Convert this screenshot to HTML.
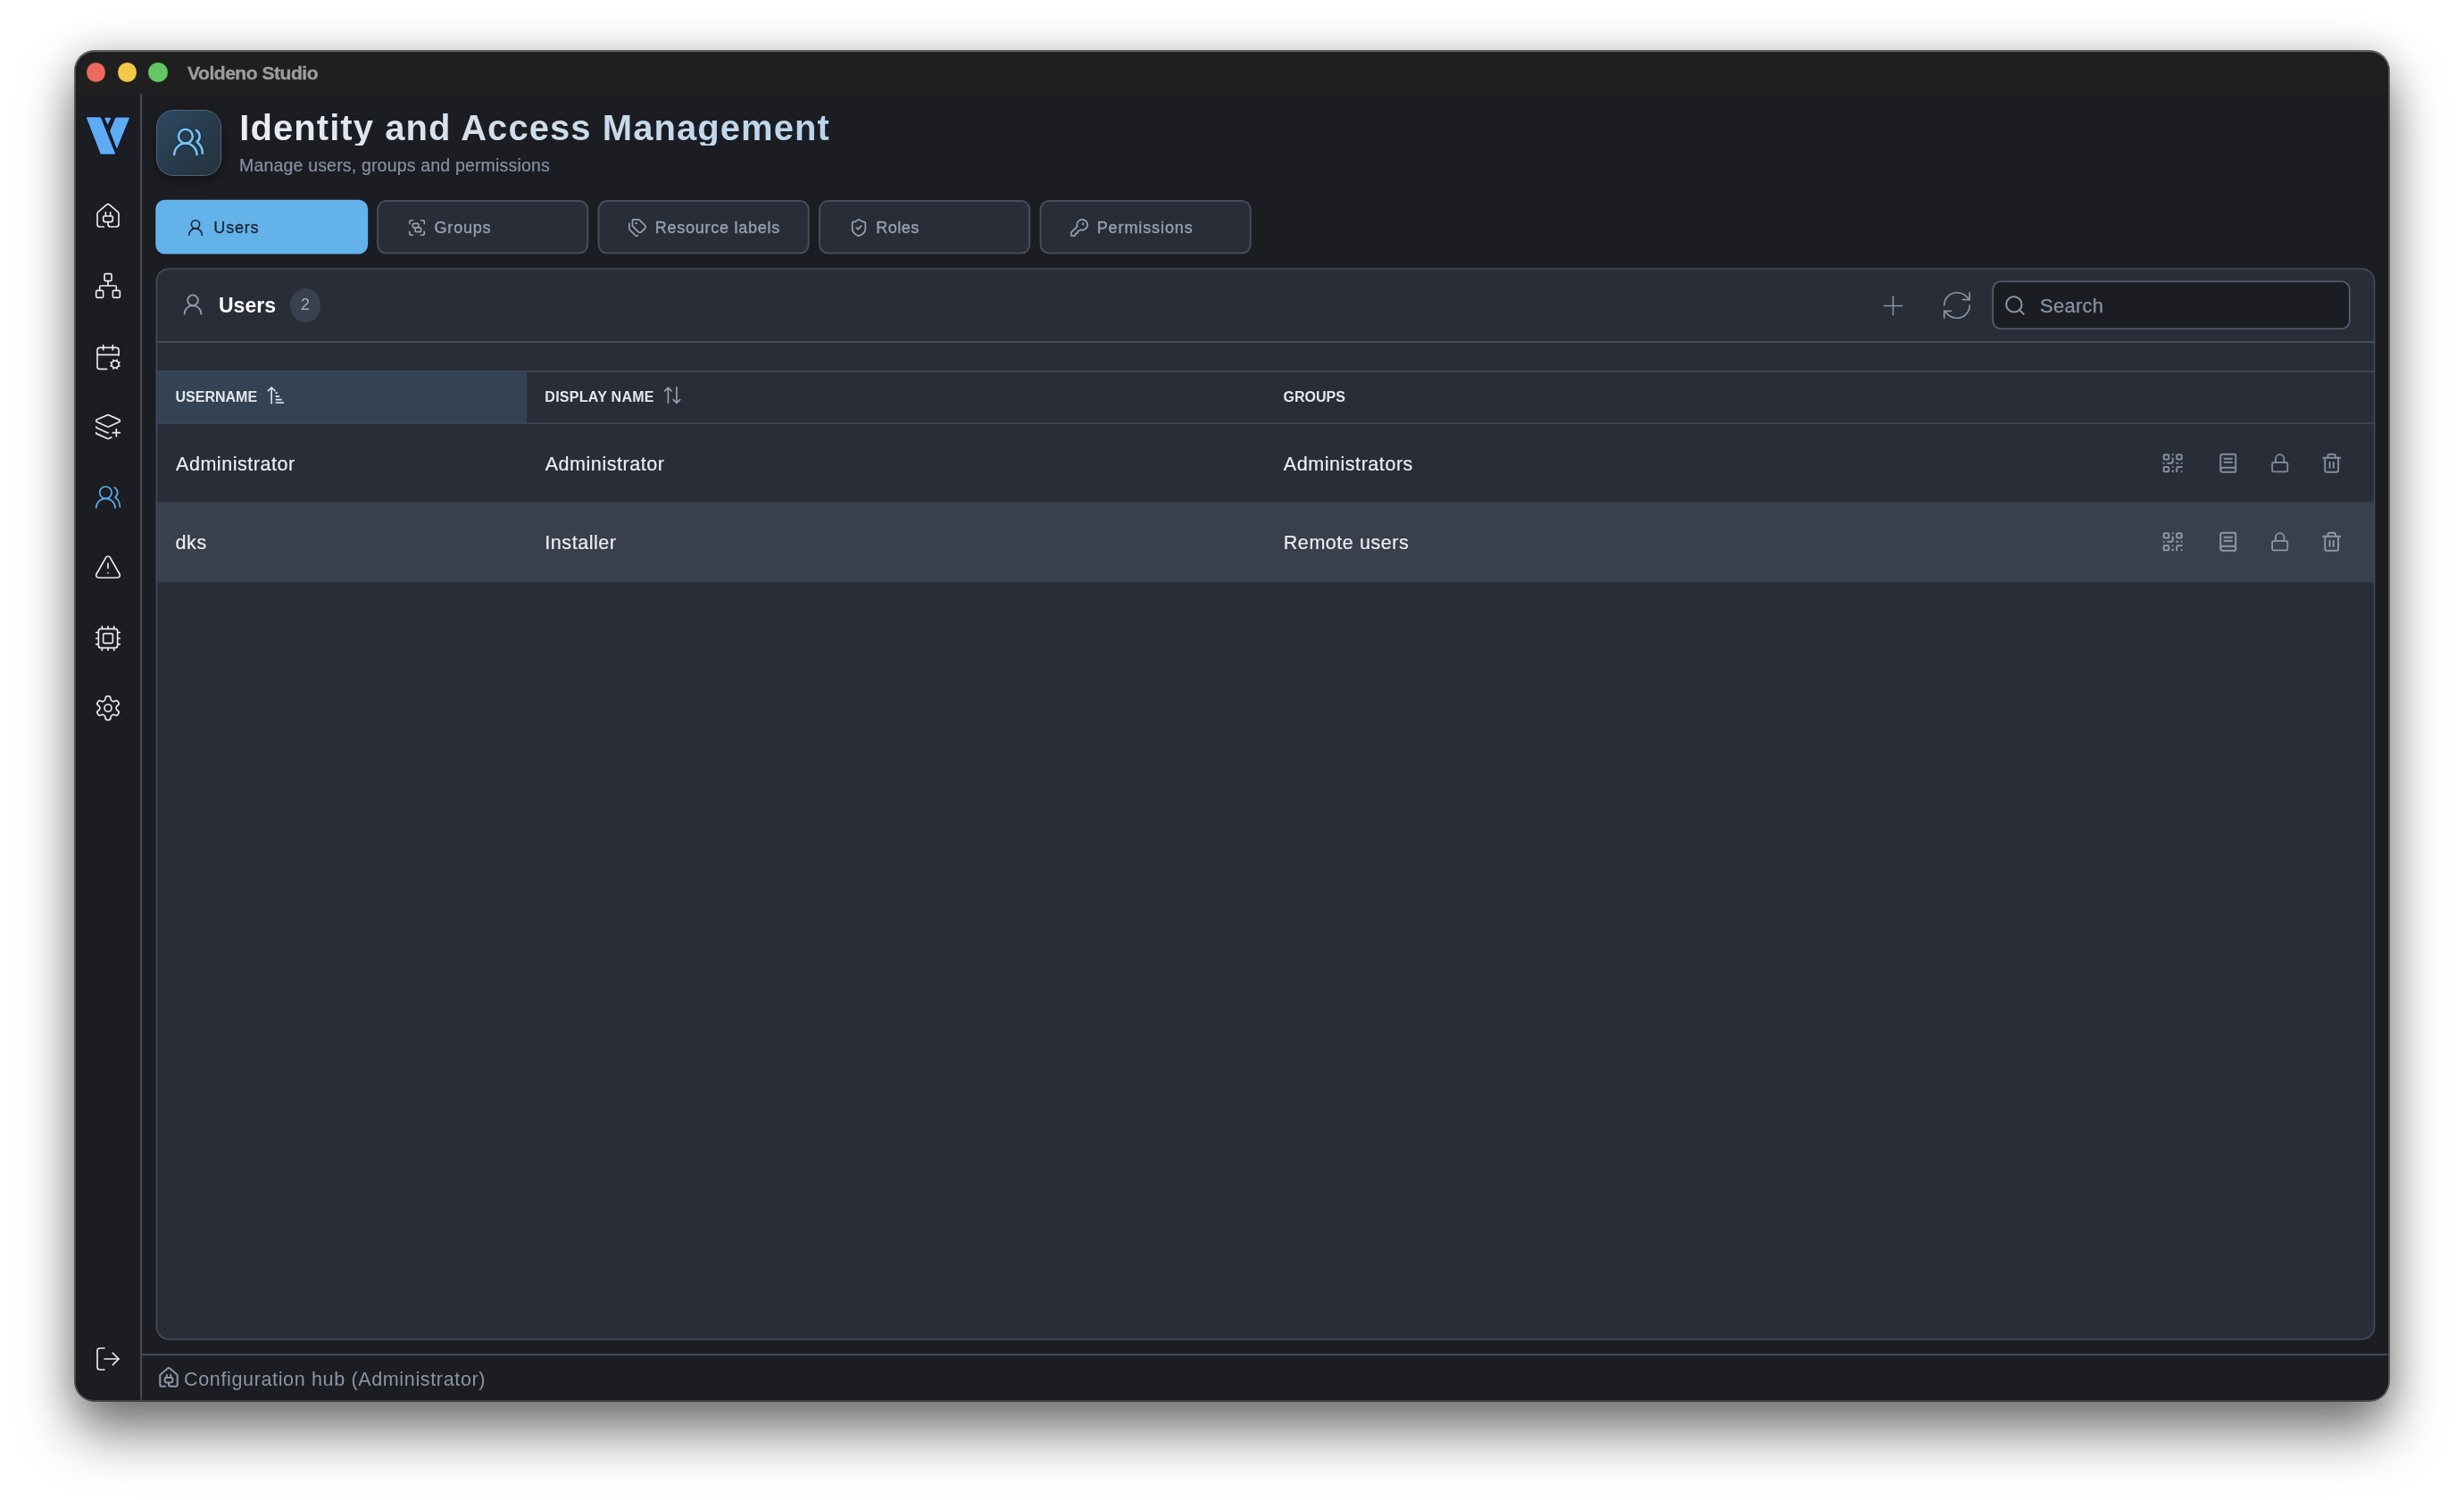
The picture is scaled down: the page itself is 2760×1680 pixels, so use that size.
<!DOCTYPE html>
<html lang="en">
<head>
<meta charset="utf-8">
<title>Voldeno Studio</title>
<style>
*{box-sizing:border-box;margin:0;padding:0}
html,body{width:2760px;height:1680px;overflow:hidden;background:#fff}
body{font-family:"Liberation Sans",sans-serif;position:relative}
.win{position:absolute;left:84px;top:57px;width:2592px;height:1511.5px;border-radius:22px;background:#1b1d23;overflow:hidden;z-index:2}
.shadow{position:absolute;left:84px;top:57px;width:2592px;height:1511.5px;border-radius:22px;z-index:1;
 box-shadow:0 0 0 1px rgba(0,0,0,.55),0 36px 60px rgba(0,0,0,.5),0 2px 44px rgba(0,0,0,.21)}
.pg{position:absolute;left:-84px;top:-57px;width:2760px;height:1680px}
.edge{position:absolute;left:84px;top:57px;width:2592px;height:1511.5px;border-radius:22px;box-shadow:inset 0 0 0 1.2px rgba(255,255,255,.2),inset 0 1px 0 .5px rgba(255,255,255,.16),inset 0 0 0 2.2px rgba(0,0,0,.4);pointer-events:none;z-index:5}
.abs{position:absolute}
.t{position:absolute;white-space:nowrap;line-height:1;will-change:opacity;opacity:.999}
.titlebar{position:absolute;left:84px;top:56px;width:2592px;height:49.5px;background:#1f1f1f}
.tl{position:absolute;width:21.6px;height:21.6px;border-radius:50%;top:70.25px;box-shadow:inset 0 0 0 .6px rgba(0,0,0,.18)}
.side{position:absolute;left:84px;top:105px;width:74px;height:1464px;background:#1b1d23}
.sideline{position:absolute;left:157.2px;top:105px;width:1.6px;height:1464px;background:#3e4451}
.ico{position:absolute;fill:none;stroke:currentColor;stroke-linecap:round;stroke-linejoin:round;overflow:visible}
.sb{color:#e9ebee;stroke-width:1.25}
.tab{position:absolute;top:224px;height:60.5px;width:237.5px;border-radius:11.5px;background:#2a2e38;border:1.5px solid #40465300;box-shadow:inset 0 0 0 1.4px #3f4552}
.tab.on{background:#63b3ea;box-shadow:none}
.panel{position:absolute;left:175px;top:300px;width:2486px;height:1200.5px;border-radius:15px;background:#2a2e38;border:1.5px solid #3e4451;overflow:hidden}
.hl{position:absolute;height:1.5px;background:#3e4451}
</style>
</head>
<body>
<div class="shadow"></div>
<div class="win"><div class="pg">

<!-- title bar -->
<div class="titlebar"></div>
<div class="tl" style="left:96.900px;background:#ec6a5f"></div>
<div class="tl" style="left:131.600px;background:#f4c848"></div>
<div class="tl" style="left:166.100px;background:#63c766"></div>
<div class="t" id="wtitle" style="left:210px;top:71px;font-size:21px;font-weight:700;letter-spacing:-.450px;color:#9e9e9e;-webkit-text-stroke:.35px #9e9e9e">Voldeno Studio</div>

<!-- sidebar -->
<div class="side"></div>
<svg class="abs" style="left:0;top:0" width="2760" height="1680"><rect x="157.070" y="105" width="2" height="1465" fill="#464c59"/></svg>

<!-- sidebar icons -->
<svg class="ico sb" width="32" height="32" viewBox="0 0 24 24" style="left:105px;top:226.0px"><path d="M10 12V8.964"/><path d="M14 12V8.964"/><path d="M15 12a1 1 0 0 1 1 1v2a2 2 0 0 1-2 2h-4a2 2 0 0 1-2-2v-2a1 1 0 0 1 1-1z"/><path d="M8.5 21H5a2 2 0 0 1-2-2v-9a2 2 0 0 1 .709-1.528l7-5.999a2 2 0 0 1 2.582 0l7 5.999A2 2 0 0 1 21 10v9a2 2 0 0 1-2 2h-5a2 2 0 0 1-2-2v-2"/></svg>
<svg class="ico sb" width="32" height="32" viewBox="0 0 24 24" style="left:105px;top:304.0px"><rect x="16" y="16" width="6" height="6" rx="1"/><rect x="2" y="16" width="6" height="6" rx="1"/><rect x="9" y="2" width="6" height="6" rx="1"/><path d="M5 16v-3a1 1 0 0 1 1-1h12a1 1 0 0 1 1 1v3"/><path d="M12 12V8"/></svg>
<svg class="ico sb" width="32" height="32" viewBox="0 0 24 24" style="left:105px;top:384.0px"><path d="m15.228 16.852-.923-.383"/><path d="m15.228 19.148-.923.383"/><path d="M16 2v4"/><path d="m16.47 14.305.382.923"/><path d="m16.852 20.772-.383.924"/><path d="m19.148 15.228.383-.923"/><path d="m19.53 21.696-.382-.924"/><path d="m20.772 16.852.924-.383"/><path d="m20.772 19.148.924.383"/><path d="M21 10.592V6a2 2 0 0 0-2-2H5a2 2 0 0 0-2 2v14a2 2 0 0 0 2 2h6"/><path d="M3 10h18"/><path d="M8 2v4"/><circle cx="18" cy="18" r="3"/></svg>
<svg class="ico sb" width="32" height="32" viewBox="0 0 24 24" style="left:105px;top:462.0px"><path d="M12.83 2.18a2 2 0 0 0-1.66 0L2.6 6.08a1 1 0 0 0 0 1.83l8.58 3.91a2 2 0 0 0 1.66 0l8.58-3.9a1 1 0 0 0 0-1.83z"/><path d="M16 17h6"/><path d="M19 14v6"/><path d="M2 12a1 1 0 0 0 .58.91l8.6 3.91a2 2 0 0 0 .825.178"/><path d="M2 17a1 1 0 0 0 .58.91l8.6 3.91a2 2 0 0 0 1.65 0l2.116-.962"/></svg>
<svg class="ico sb" width="32" height="32" viewBox="0 0 24 24" style="left:105px;top:541.3px;color:#5ea8e2"><path d="M18 21a8 8 0 0 0-16 0"/><circle cx="10" cy="8" r="5"/><path d="M22 20c0-3.37-2-6.5-4-8a5 5 0 0 0-.45-8.3"/></svg>
<svg class="ico sb" width="32" height="32" viewBox="0 0 24 24" style="left:105px;top:619.3px"><path d="m21.73 18-8-14a2 2 0 0 0-3.48 0l-8 14A2 2 0 0 0 4 21h16a2 2 0 0 0 1.73-3"/><path d="M12 9v4"/><path d="M12 17h.01"/></svg>
<svg class="ico sb" width="32" height="32" viewBox="0 0 24 24" style="left:105px;top:699.0px"><path d="M12 20v2"/><path d="M12 2v2"/><path d="M17 20v2"/><path d="M17 2v2"/><path d="M2 12h2"/><path d="M2 17h2"/><path d="M2 7h2"/><path d="M20 12h2"/><path d="M20 17h2"/><path d="M20 7h2"/><path d="M7 20v2"/><path d="M7 2v2"/><rect x="4" y="4" width="16" height="16" rx="2"/><rect x="8" y="8" width="8" height="8" rx="1"/></svg>
<svg class="ico sb" width="32" height="32" viewBox="0 0 24 24" style="left:105px;top:777.0px"><path d="M12.22 2h-.44a2 2 0 0 0-2 2v.18a2 2 0 0 1-1 1.73l-.43.25a2 2 0 0 1-2 0l-.15-.08a2 2 0 0 0-2.73.73l-.22.38a2 2 0 0 0 .73 2.73l.15.1a2 2 0 0 1 1 1.72v.51a2 2 0 0 1-1 1.74l-.15.09a2 2 0 0 0-.73 2.73l.22.38a2 2 0 0 0 2.73.73l.15-.08a2 2 0 0 1 2 0l.43.25a2 2 0 0 1 1 1.73V20a2 2 0 0 0 2 2h.44a2 2 0 0 0 2-2v-.18a2 2 0 0 1 1-1.73l.43-.25a2 2 0 0 1 2 0l.15.08a2 2 0 0 0 2.73-.73l.22-.39a2 2 0 0 0-.73-2.73l-.15-.08a2 2 0 0 1-1-1.74v-.5a2 2 0 0 1 1-1.74l.15-.09a2 2 0 0 0 .73-2.73l-.22-.38a2 2 0 0 0-2.73-.73l-.15.08a2 2 0 0 1-2 0l-.43-.25a2 2 0 0 1-1-1.73V4a2 2 0 0 0-2-2z"/><circle cx="12" cy="12" r="3"/></svg>
<svg class="ico sb" width="32" height="32" viewBox="0 0 24 24" style="left:105px;top:1506.0px"><path d="m16 17 5-5-5-5"/><path d="M21 12H9"/><path d="M9 21H5a2 2 0 0 1-2-2V5a2 2 0 0 1 2-2h4"/></svg>

<!-- header -->
<svg class="abs" style="left:90px;top:120px;overflow:visible" width="62" height="62" viewBox="90 120 62 62">
 <g fill="#5eaaf3" stroke="#040a1c" stroke-width="1.6" stroke-linejoin="round" paint-order="stroke">
  <path d="M97.6 131.2h14.2q1 0 1.4.9l15.9 39.6q.4 1.1-.7 1.1h-14.6q-1 0-1.4-.9l-15.5-39.6q-.4-1.1.7-1.1z"/>
  <path d="M130.2 131.5h14q1.1 0 .7 1l-13.6 33.4q-.4.9-.8 0l-7.3-18.6q-.2-.6.1-1.200l5.900-14q.3-.6 1-.6z"/>
  <path d="M117.700 131.800h6q.8 0 .5.700l-3.100 6.700q-.4.800-.8 0l-3.100-6.700q-.3-.7.500-.7z"/>
 </g>
</svg>
<div class="abs" style="left:174.600px;top:122.900px;width:73.700px;height:73.700px;border-radius:19px;border:1.400px solid #4f6478;background:linear-gradient(135deg,#2e4963 0%,#283b4c 50%,#25323d 100%);box-shadow:0 5px 14px rgba(0,0,0,.35)"></div>
<svg class="ico" style="left:192.300px;top:140.200px;color:#79c2f0;stroke-width:1.600;filter:drop-shadow(0 0 1px #0d2740)" width="38" height="38" viewBox="0 0 24 24"><path d="M18 21a8 8 0 0 0-16 0"/><circle cx="10" cy="8" r="5"/><path d="M22 20c0-3.370-2-6.500-4-8a5 5 0 0 0-.450-8.300"/></svg>
<div class="t" id="h1" style="left:268.300px;top:123.100px;font-size:40px;font-weight:700;letter-spacing:1.060px;background:linear-gradient(90deg,#eceef3 0%,#d3deeb 45%,#b9d6ee 100%);-webkit-background-clip:text;background-clip:text;color:transparent">Identity and Access Management</div>
<div class="t" id="h2" style="left:268px;top:176.100px;font-size:19.500px;letter-spacing:.180px;-webkit-text-stroke:.2px;color:#8791a3">Manage users, groups and permissions</div>


<!-- tabs -->
<svg class="abs" style="left:0;top:0" width="2760" height="1680"><rect x="174.250" y="223.750" width="237.900" height="60.750" rx="10.500" fill="#63b3ea"/><rect x="423.04" y="225.100" width="235.200" height="58.400" rx="9.500" fill="#292d37" stroke="#464c5a" stroke-width="2"/><rect x="670.54" y="225.100" width="235.200" height="58.400" rx="9.500" fill="#292d37" stroke="#464c5a" stroke-width="2"/><rect x="918.04" y="225.100" width="235.200" height="58.400" rx="9.500" fill="#292d37" stroke="#464c5a" stroke-width="2"/><rect x="1165.54" y="225.100" width="235.200" height="58.400" rx="9.500" fill="#292d37" stroke="#464c5a" stroke-width="2"/></svg>
<svg class="ico" style="left:208.25px;top:243.500px;color:#1c2733;stroke-width:1.850" width="22" height="22" viewBox="0 0 24 24"><circle cx="12" cy="8" r="5"/><path d="M20 21a8 8 0 0 0-16 0"/></svg>
<div class="t" id="tab0" style="left:239.35px;top:246.400px;font-size:18px;-webkit-text-stroke:.35px;letter-spacing:0.800px;color:#1c2733">Users</div>
<svg class="ico" style="left:456.25px;top:243.500px;color:#98a1b0;stroke-width:1.850" width="22" height="22" viewBox="0 0 24 24"><path d="M3 7V5c0-1.100.900-2 2-2h2"/><path d="M17 3h2c1.100 0 2 .900 2 2v2"/><path d="M21 17v2c0 1.100-.900 2-2 2h-2"/><path d="M7 21H5c-1.100 0-2-.900-2-2v-2"/><rect width="7" height="5" x="7" y="7" rx="1"/><rect width="7" height="5" x="10" y="12" rx="1"/></svg>
<div class="t" id="tab1" style="left:486.55px;top:246.400px;font-size:18px;-webkit-text-stroke:.35px;letter-spacing:0.800px;color:#98a1b0">Groups</div>
<svg class="ico" style="left:703.40px;top:243.500px;color:#98a1b0;stroke-width:1.850" width="22" height="22" viewBox="0 0 24 24"><path d="M13.172 2a2 2 0 0 1 1.414.586l6.710 6.710a2.400 2.400 0 0 1 0 3.408l-4.592 4.592a2.400 2.400 0 0 1-3.408 0l-6.710-6.710A2 2 0 0 1 6 9.172V3a1 1 0 0 1 1-1z"/><path d="M2 7v6.172a2 2 0 0 0 .586 1.414l6.710 6.710a2.400 2.400 0 0 0 3.191.193"/><circle cx="10.500" cy="6.500" r=".5" fill="currentColor"/></svg>
<div class="t" id="tab2" style="left:733.70px;top:246.400px;font-size:18px;-webkit-text-stroke:.35px;letter-spacing:0.750px;color:#98a1b0">Resource labels</div>
<svg class="ico" style="left:950.90px;top:243.500px;color:#98a1b0;stroke-width:1.850" width="22" height="22" viewBox="0 0 24 24"><path d="M20 13c0 5-3.500 7.500-7.660 8.950a1 1 0 0 1-.670-.010C7.500 20.500 4 18 4 13V6a1 1 0 0 1 1-1c2 0 4.500-1.200 6.240-2.720a1.170 1.170 0 0 1 1.520 0C14.510 3.810 17 5 19 5a1 1 0 0 1 1 1z"/><path d="m9 12 2 2 4-4"/></svg>
<div class="t" id="tab3" style="left:981.20px;top:246.400px;font-size:18px;-webkit-text-stroke:.35px;letter-spacing:0.500px;color:#98a1b0">Roles</div>
<svg class="ico" style="left:1198.40px;top:243.500px;color:#98a1b0;stroke-width:1.850" width="22" height="22" viewBox="0 0 24 24"><path d="M2.586 17.414A2 2 0 0 0 2 18.828V21a1 1 0 0 0 1 1h3a1 1 0 0 0 1-1v-1a1 1 0 0 1 1-1h1a1 1 0 0 0 1-1v-1a1 1 0 0 1 1-1h.172a2 2 0 0 0 1.414-.586l.814-.814a6.500 6.500 0 1 0-4-4z"/><circle cx="16.500" cy="7.500" r=".5" fill="currentColor"/></svg>
<div class="t" id="tab4" style="left:1228.70px;top:246.400px;font-size:18px;-webkit-text-stroke:.35px;letter-spacing:0.900px;color:#98a1b0">Permissions</div>

<!-- panel -->
<svg class="abs" style="left:0;top:0" width="2760" height="1680"><rect x="175.400" y="300.950" width="2484.200" height="1199.050" rx="14" fill="#292d37" stroke="#464c5a" stroke-width="1.600"/></svg>
<svg class="ico" style="left:201.55px;top:327.40px;color:#8c95a5;stroke-width:1.700" width="28" height="28" viewBox="0 0 24 24"><circle cx="12" cy="8" r="5"/><path d="M20 21a8 8 0 0 0-16 0"/></svg>
<div class="t" id="ph" style="left:245px;top:331.200px;font-size:23px;font-weight:700;color:#fff">Users</div>
<div class="abs" style="left:325px;top:323.300px;width:33.700px;height:37.500px;border-radius:50%;background:#394050"></div>
<div class="t" id="badge" style="left:325px;width:33.700px;text-align:center;top:332.200px;font-size:18.500px;color:#a2abba">2</div>
<svg class="ico" style="left:2103.25px;top:324.50px;color:#8b94a4;stroke-width:1.100" width="35" height="35" viewBox="0 0 24 24"><path d="M5 12h14"/><path d="M12 5v14"/></svg>
<svg class="ico" style="left:2172.60px;top:322.60px;color:#8b94a4;stroke-width:1.050" width="38" height="38" viewBox="0 0 24 24"><path d="M3 12a9 9 0 0 1 9-9 9.750 9.750 0 0 1 6.740 2.740L21 8"/><path d="M21 3v5h-5"/><path d="M21 12a9 9 0 0 1-9 9 9.750 9.750 0 0 1-6.740-2.740L3 16"/><path d="M8 16H3v5"/></svg>
<svg class="abs" style="left:0;top:0" width="2760" height="1680"><rect x="2232.300" y="315.300" width="399.500" height="53" rx="9" fill="#1b1d23" stroke="#586071" stroke-width="1.600"/></svg>
<svg class="ico" style="left:2243.80px;top:328.60px;color:#8b94a4;stroke-width:1.850" width="26" height="26" viewBox="0 0 24 24"><circle cx="11" cy="11" r="8"/><path d="m21 21-4.300-4.300"/></svg>
<div class="t" id="search" style="left:2285px;top:331.900px;font-size:22px;letter-spacing:.250px;-webkit-text-stroke:.25px;color:#8a94a5">Search</div>
<svg class="abs" style="left:0;top:0" width="2760" height="1680"><rect x="176.200" y="382.100" width="2482.800" height="2" fill="#464c59"/><rect x="176.200" y="415" width="2482.800" height="2" fill="#3e4452"/><rect x="176.200" y="473.100" width="2482.800" height="2" fill="#3e4452"/></svg>
<div class="abs" style="left:176.300px;top:415.300px;width:413.900px;height:59.700px;background:#334353;border-top:1.500px solid #3a4858;border-bottom:1.500px solid #3a4858"></div>
<div class="t" id="th1" style="left:196.500px;top:437px;font-size:16px;font-weight:700;color:#e6e9ee">USERNAME</div>
<div class="t" id="th2" style="left:610.300px;top:437px;font-size:16px;font-weight:700;letter-spacing:.280px;color:#e6e9ee">DISPLAY NAME</div>
<svg class="abs" style="left:0;top:0;fill:none;stroke-linecap:round;stroke-linejoin:round" width="2760" height="1680">
<g stroke="#e6eaf0" stroke-width="1.600"><path d="M304.100 451.700V434.200M300.300 437.800l3.800-3.800 3.800 3.800"/><path stroke-linecap="butt" d="M308.600 440.100h2.100M308.600 443.900h4.600M308.600 447.600h7M308.600 451h9.400"/></g>
<g stroke="#99a2b2" stroke-width="1.600"><path d="M748.400 451.500V434.200M744.600 437.900l3.800-3.800 3.800 3.800"/><path d="M757.900 433.600V451.200M754.100 447.600l3.800 3.800 3.800-3.800"/></g>
</svg>
<div class="t" id="th3" style="left:1437.500px;top:437px;font-size:16px;font-weight:700;color:#e6e9ee">GROUPS</div>
<div class="abs" style="left:176.200px;top:561.800px;width:2482.600px;height:90.200px;background:#393f4c"></div>
<div class="t" id="r0c0" style="left:197.0px;top:509.7px;font-size:21.500px;letter-spacing:.550px;-webkit-text-stroke:.2px;color:#eceef2">Administrator</div>
<div class="t" id="r0c1" style="left:610.7px;top:509.7px;font-size:21.500px;letter-spacing:.550px;-webkit-text-stroke:.2px;color:#eceef2">Administrator</div>
<div class="t" id="r0c2" style="left:1437.8px;top:509.7px;font-size:21.500px;letter-spacing:.550px;-webkit-text-stroke:.2px;color:#eceef2">Administrators</div>
<svg class="ico" style="left:2421.45px;top:505.75px;color:#838d9e;stroke-width:1.850" width="25.5" height="25.5" viewBox="0 0 24 24"><g transform="translate(12 12) scale(1.05 1) translate(-12 -12)"><rect width="5" height="5" x="3" y="3" rx="1"/><rect width="5" height="5" x="16" y="3" rx="1"/><rect width="5" height="5" x="3" y="16" rx="1"/><path d="M21 16h-3a2 2 0 0 0-2 2v3"/><path d="M21 21v.010"/><path d="M12 7v3a2 2 0 0 1-2 2H7"/><path d="M3 12h.010"/><path d="M12 3h.010"/><path d="M12 16v.010"/><path d="M16 12h1"/><path d="M21 12v.010"/><path d="M12 21v-1"/></g></svg>
<svg class="ico" style="left:2483.35px;top:505.75px;color:#838d9e;stroke-width:1.850" width="25.5" height="25.5" viewBox="0 0 24 24"><g transform="translate(12 12) scale(1 .94) translate(-12 -12)"><path d="M4 19.500v-15A2.500 2.500 0 0 1 6.500 2H19a1 1 0 0 1 1 1v18a1 1 0 0 1-1 1H6.500a1 1 0 0 1 0-5H20"/><path d="M8 11h8"/><path d="M8 7h8"/></g></svg>
<svg class="ico" style="left:2540.85px;top:505.75px;color:#838d9e;stroke-width:1.850" width="25.5" height="25.5" viewBox="0 0 24 24"><g transform="translate(12 12) scale(.9) translate(-12 -12)"><rect width="18" height="11" x="3" y="11" rx="2" ry="2"/><path d="M7 11V7a5 5 0 0 1 10 0v4"/></g></svg>
<svg class="ico" style="left:2598.65px;top:505.75px;color:#838d9e;stroke-width:1.850" width="25.5" height="25.5" viewBox="0 0 24 24"><g transform="translate(12 12) scale(1 .94) translate(-12 -12)"><path d="M3 6h18"/><path d="M19 6v14c0 1-1 2-2 2H7c-1 0-2-1-2-2V6"/><path d="M8 6V4c0-1 1-2 2-2h4c1 0 2 1 2 2v2"/><path d="M10 11v6"/><path d="M14 11v6"/></g></svg>
<div class="t" id="r1c0" style="left:196.6px;top:597.7px;font-size:21.500px;letter-spacing:.550px;-webkit-text-stroke:.2px;color:#eceef2">dks</div>
<div class="t" id="r1c1" style="left:610.3px;top:597.7px;font-size:21.500px;letter-spacing:.550px;-webkit-text-stroke:.2px;color:#eceef2">Installer</div>
<div class="t" id="r1c2" style="left:1437.8px;top:597.7px;font-size:21.500px;letter-spacing:.550px;-webkit-text-stroke:.2px;color:#eceef2">Remote users</div>
<svg class="ico" style="left:2421.45px;top:594.25px;color:#8d97a8;stroke-width:1.850" width="25.5" height="25.5" viewBox="0 0 24 24"><g transform="translate(12 12) scale(1.05 1) translate(-12 -12)"><rect width="5" height="5" x="3" y="3" rx="1"/><rect width="5" height="5" x="16" y="3" rx="1"/><rect width="5" height="5" x="3" y="16" rx="1"/><path d="M21 16h-3a2 2 0 0 0-2 2v3"/><path d="M21 21v.010"/><path d="M12 7v3a2 2 0 0 1-2 2H7"/><path d="M3 12h.010"/><path d="M12 3h.010"/><path d="M12 16v.010"/><path d="M16 12h1"/><path d="M21 12v.010"/><path d="M12 21v-1"/></g></svg>
<svg class="ico" style="left:2483.35px;top:594.25px;color:#8d97a8;stroke-width:1.850" width="25.5" height="25.5" viewBox="0 0 24 24"><g transform="translate(12 12) scale(1 .94) translate(-12 -12)"><path d="M4 19.500v-15A2.500 2.500 0 0 1 6.500 2H19a1 1 0 0 1 1 1v18a1 1 0 0 1-1 1H6.500a1 1 0 0 1 0-5H20"/><path d="M8 11h8"/><path d="M8 7h8"/></g></svg>
<svg class="ico" style="left:2540.85px;top:594.25px;color:#8d97a8;stroke-width:1.850" width="25.5" height="25.5" viewBox="0 0 24 24"><g transform="translate(12 12) scale(.9) translate(-12 -12)"><rect width="18" height="11" x="3" y="11" rx="2" ry="2"/><path d="M7 11V7a5 5 0 0 1 10 0v4"/></g></svg>
<svg class="ico" style="left:2598.65px;top:594.25px;color:#8d97a8;stroke-width:1.850" width="25.5" height="25.5" viewBox="0 0 24 24"><g transform="translate(12 12) scale(1 .94) translate(-12 -12)"><path d="M3 6h18"/><path d="M19 6v14c0 1-1 2-2 2H7c-1 0-2-1-2-2V6"/><path d="M8 6V4c0-1 1-2 2-2h4c1 0 2 1 2 2v2"/><path d="M10 11v6"/><path d="M14 11v6"/></g></svg>

<!-- status -->
<svg class="abs" style="left:0;top:0" width="2760" height="1680"><rect x="159" y="1516.150" width="2518" height="1.950" fill="#464c59"/></svg>
<svg class="ico" style="left:175.700px;top:1530.300px;color:#8b95a7;stroke-width:1.900" width="26" height="26" viewBox="0 0 24 24"><path d="M10 12V8.964"/><path d="M14 12V8.964"/><path d="M15 12a1 1 0 0 1 1 1v2a2 2 0 0 1-2 2h-4a2 2 0 0 1-2-2v-2a1 1 0 0 1 1-1z"/><path d="M8.500 21H5a2 2 0 0 1-2-2v-9a2 2 0 0 1 .709-1.528l7-5.999a2 2 0 0 1 2.582 0l7 5.999A2 2 0 0 1 21 10v9a2 2 0 0 1-2 2h-5a2 2 0 0 1-2-2v-2"/></svg>
<div class="t" id="status" style="left:206px;top:1535.100px;font-size:21.500px;letter-spacing:.650px;color:#8b95a7">Configuration hub (Administrator)</div>

<div class="edge"></div>
</div></div>
</body>
</html>
